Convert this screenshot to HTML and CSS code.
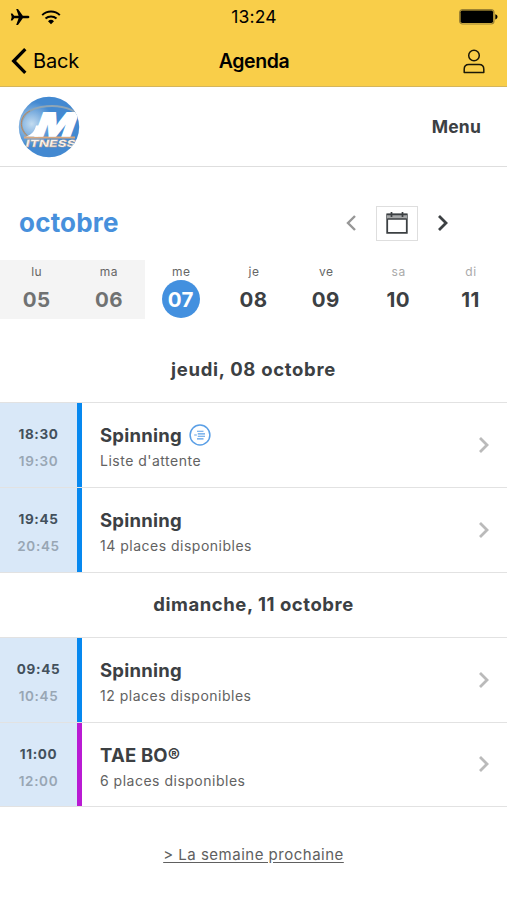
FILE: index.html
```html
<!DOCTYPE html>
<html lang="fr">
<head>
<meta charset="utf-8">
<meta name="viewport" content="width=device-width, initial-scale=1">
<title>Agenda</title>
<link rel="stylesheet" href="styles.css">
</head>
<body>
<header class="top">
  <div class="status">
    <div class="status-left">
      <svg width="20" height="18" viewBox="0 0 20 18"><path d="M19.4 9c0 .8-.8 1.3-2 1.3h-4.6L8 17H6.2l2.4-6.7H4.2L2.4 12.600H.8L1.700 9 .8 5.400h1.600l1.800 2.300h4.400L6.200 1H8l4.800 6.700h4.600c1.200 0 2 .5 2 1.300z"/></svg>
      <svg width="20" height="16" viewBox="0 0 20 16" fill="none" stroke="#000" stroke-width="2"><path d="M1.200 6.100a12.500 12.500 0 0 1 17.600 0M4.500 9.600a8 8 0 0 1 11 0"/><path d="M7 12.200a4.400 4.400 0 0 1 6 0L10 15.200z" fill="#000" stroke="none"/></svg>
    </div>
    <span class="clock">13:24</span>
    <div class="status-right">
      <svg width="39" height="16" viewBox="0 0 39 16"><rect x=".6" y=".6" width="34.400" height="14.400" rx="3" fill="none" stroke="#9c8232" stroke-width="1.200"/><rect x="1.500" y="1.500" width="32.600" height="12.600" rx="1.800"/><path d="M36.300 5.200c1.600.4 2.200 1.400 2.200 2.600s-.6 2.200-2.200 2.600z"/></svg>
    </div>
  </div>
  <nav class="nav">
    <div class="back">
      <svg width="16" height="26" viewBox="0 0 16 26" fill="none" stroke="#000" stroke-width="3.300"><path d="M14.300 1.200 2.700 13l11.600 11.800"/></svg>
      <span>Back</span>
    </div>
    <h1>Agenda</h1>
    <svg class="user" width="22" height="25" viewBox="0 0 22 25" fill="none" stroke="#1b1808" stroke-width="1.500"><circle cx="11" cy="6.500" r="5.300"/><path d="M1.200 23.600v-3.300c0-3 1.800-4.800 4.600-4.800h10.400c2.800 0 4.600 1.800 4.600 4.800v3.300z" stroke-linejoin="round"/></svg>
  </nav>
</header>
<div class="brand">
  <svg class="logo" width="62" height="62" viewBox="0 0 62 62">
    <defs>
      <clipPath id="disc"><circle cx="31" cy="31" r="30.200"/></clipPath>
      <radialGradient id="glow" cx=".22" cy=".45" r=".36"><stop offset="0" stop-color="#c3dcf0"/><stop offset="1" stop-color="#4389d1"/></radialGradient>
    </defs>
    <g clip-path="url(#disc)">
      <rect width="62" height="62" fill="url(#glow)"/>
      <path d="M10 41C-3 29 5 14 23 11c15-2.500 29 0 36 7" fill="none" stroke="#8ea5b6" stroke-width="2"/>
      <path d="M12 42C-1 33 2 19 12 15" fill="none" stroke="#b8865d" stroke-width="1"/>
      <path d="M6 41.500h51" stroke="#d9a77e" stroke-width="2"/>
      <path d="M8 40.500c6-2 9-6 10-11l4 0-2 11z" fill="#fff"/>
      <text class="mark" transform="translate(15 39.500) skewX(-20)" textLength="39" lengthAdjust="spacingAndGlyphs">M</text>
      <text class="mark-sub" transform="translate(7 50.500) skewX(-12)" textLength="50" lengthAdjust="spacingAndGlyphs">ITNESS</text>
    </g>
  </svg>
  <span class="menu">Menu</span>
</div>
<main>
  <div class="month">
    <h2>octobre</h2>
    <div class="pager">
      <svg width="12" height="18" viewBox="0 0 12 18" fill="none" stroke="#979797" stroke-width="2.400"><path d="M10 2 3 9l7 7"/></svg>
      <div class="calendar">
        <svg width="22" height="22" viewBox="0 0 22 22" fill="none" stroke="#3c4043" stroke-width="1.800"><path d="M1.200 2.500h19.600v18.300H1.200z"/><path d="M1 3h20v4H1z" fill="#a5a7a8" stroke="none"/><path d="M1.200 7h19.600M1.200 2.500h19.600" stroke-width="1.500"/><path d="M5.500 0v5M16.500 0v5" stroke-width="1.700"/></svg>
      </div>
      <svg width="12" height="18" viewBox="0 0 12 18" fill="none" stroke="#3c4043" stroke-width="2.800"><path d="m2 2 7 7-7 7"/></svg>
    </div>
  </div>
  <div class="week">
    <div class="day past"><small>lu</small><b>05</b></div>
    <div class="day past"><small>ma</small><b>06</b></div>
    <div class="day today"><small>me</small><b>07</b></div>
    <div class="day"><small>je</small><b>08</b></div>
    <div class="day"><small>ve</small><b>09</b></div>
    <div class="day weekend"><small>sa</small><b>10</b></div>
    <div class="day weekend"><small>di</small><b>11</b></div>
  </div>

  <h3 class="thursday">jeudi, 08 octobre</h3>
  <section class="list">
    <article class="row">
      <div class="time"><b>18:30</b><span>19:30</span></div>
      <div class="info">
        <h4><span>Spinning</span><svg width="22" height="22" viewBox="0 0 22 22" fill="none" stroke="#5a9fe6" stroke-width="1.500"><circle cx="11" cy="11" r="9.900"/><path d="M8 7.200h6.500M8.800 9.900h7.200M8.800 12.200h7.200M8 14.900h6.500M5.200 11h2.600" stroke-width="1.100"/></svg></h4>
        <p>Liste d'attente</p>
      </div>
      <svg class="go" width="12" height="18" viewBox="0 0 12 18"><path d="m2 2 7 7-7 7"/></svg>
    </article>
    <article class="row">
      <div class="time"><b>19:45</b><span>20:45</span></div>
      <div class="info"><h4><span>Spinning</span></h4><p>14 places disponibles</p></div>
      <svg class="go" width="12" height="18" viewBox="0 0 12 18"><path d="m2 2 7 7-7 7"/></svg>
    </article>
  </section>

  <h3 class="sunday">dimanche, 11 octobre</h3>
  <section class="list">
    <article class="row">
      <div class="time"><b>09:45</b><span>10:45</span></div>
      <div class="info"><h4><span>Spinning</span></h4><p>12 places disponibles</p></div>
      <svg class="go" width="12" height="18" viewBox="0 0 12 18"><path d="m2 2 7 7-7 7"/></svg>
    </article>
    <article class="row">
      <div class="time violet"><b>11:00</b><span>12:00</span></div>
      <div class="info"><h4><span class="taebo">TAE BO®</span></h4><p>6 places disponibles</p></div>
      <svg class="go" width="12" height="18" viewBox="0 0 12 18"><path d="m2 2 7 7-7 7"/></svg>
    </article>
  </section>
  <div class="next"><a>&gt; La semaine prochaine</a></div>
</main>
</body>
</html>
```

FILE: styles.css
```css
* { box-sizing: border-box; margin: 0; padding: 0; }
body {
  width: 507px;
  height: 900px;
  overflow: hidden;
  background: #fff;
  color: #3c4043;
  font-family: Inter, "Liberation Sans", sans-serif;
}
svg { display: block; flex: none; }

.top { height: 87px; background: #f9ce49; border-bottom: 1px solid #d5b55b; color: #000; }
.status { display: grid; grid-template-columns: 1fr auto 1fr; align-items: center; height: 34px; padding: 0 9px 0 10px; }
.status-left { display: flex; align-items: center; gap: 11px; }
.status-right { display: flex; justify-content: flex-end; }
.clock { font-size: 17.5px; line-height: 20px; letter-spacing: .2px; }
.nav { display: grid; grid-template-columns: 1fr auto 1fr; align-items: center; height: 52px; padding: 2px 22px 0 11px; }
.back { display: flex; align-items: center; gap: 6px; font-size: 20px; letter-spacing: -.15px; }
.nav h1 { font-size: 19.5px; font-weight: 600; letter-spacing: -.4px; padding-left: 12px; }
.user { justify-self: end; }

.brand { display: flex; align-items: center; justify-content: space-between; height: 80px; padding: 0 26px 0 18px; border-bottom: 1px solid #dedede; }
.mark { font: 800 32px Inter, sans-serif; fill: #fff; stroke: #fff; stroke-width: 1.5px; }
.mark-sub { font: 800 10px Inter, sans-serif; fill: #f8f3ee; stroke: #c99b76; stroke-width: .3px; }
.menu { font-size: 17.5px; font-weight: 700; letter-spacing: .2px; }

.month { display: flex; align-items: center; justify-content: space-between; height: 93px; padding: 19px 58px 0 19px; }
.month h2 { color: #4790dc; font-size: 26px; font-weight: 700; letter-spacing: .2px; line-height: 30px; padding-bottom: 1px; }
.pager { display: flex; align-items: center; gap: 19px; }
.calendar { display: flex; align-items: center; justify-content: center; width: 42px; height: 35px; border: 1px solid #dedede; }

.week { display: grid; grid-template-columns: repeat(7, 72.3px); height: 59px; }
.day { display: flex; flex-direction: column; align-items: center; height: 59px; padding-top: 4px; }
.day small { font-size: 12px; line-height: 16px; letter-spacing: .5px; padding-left: 1px; color: #666; }
.day b { display: flex; align-items: center; justify-content: center; width: 38px; height: 38px; padding-top: 1px; font-size: 20.5px; font-weight: 700; letter-spacing: .4px; border-radius: 50%; }
.day:nth-child(n+4) { padding-left: 1px; }
.past { background: #f4f4f4; }
.past b { color: #707272; padding-left: 1px; }
.today b { background: #4390df; color: #fff; }
.weekend small { color: #aaa; }

h3 { font-size: 18.500px; font-weight: 700; text-align: center; letter-spacing: .55px; }
.thursday { height: 83px; line-height: 101px; letter-spacing: .7px; }
.sunday { height: 64px; line-height: 63px; }

.list { border-top: 1px solid #e2e2e2; }
.row { display: flex; align-items: center; height: 85px; padding-right: 17px; border-bottom: 1px solid #e2e2e2; }
.list .row:last-child { height: 84.500px; }
.time { display: flex; flex-direction: column; align-items: center; width: 82px; height: 100%; padding-top: 18px; border-right: 5px solid #0788ef; background: #d9e8f8; font-size: 13.5px; line-height: 27px; letter-spacing: .65px; }
.time b { font-weight: 700; color: #43505c; }
.time span { font-weight: 600; color: #98a6b4; }
.violet { border-right-color: #b91bd3; }
.info { flex: 1; height: 100%; padding: 18px 0 0 18px; }
.info h4 { display: flex; align-items: center; gap: 7px; height: 28px; font-size: 18.5px; font-weight: 700; letter-spacing: .25px; }
.info .taebo { letter-spacing: .2px; }
.info p { font-size: 14px; line-height: 24px; letter-spacing: .5px; color: #626262; }
.go { fill: none; stroke: #bababa; stroke-width: 2.800px; }

.next { padding-top: 36px; text-align: center; font-size: 15px; line-height: 24px; letter-spacing: .5px; color: #606060; }
.next a { text-decoration: underline; text-underline-offset: 2px; }
```
